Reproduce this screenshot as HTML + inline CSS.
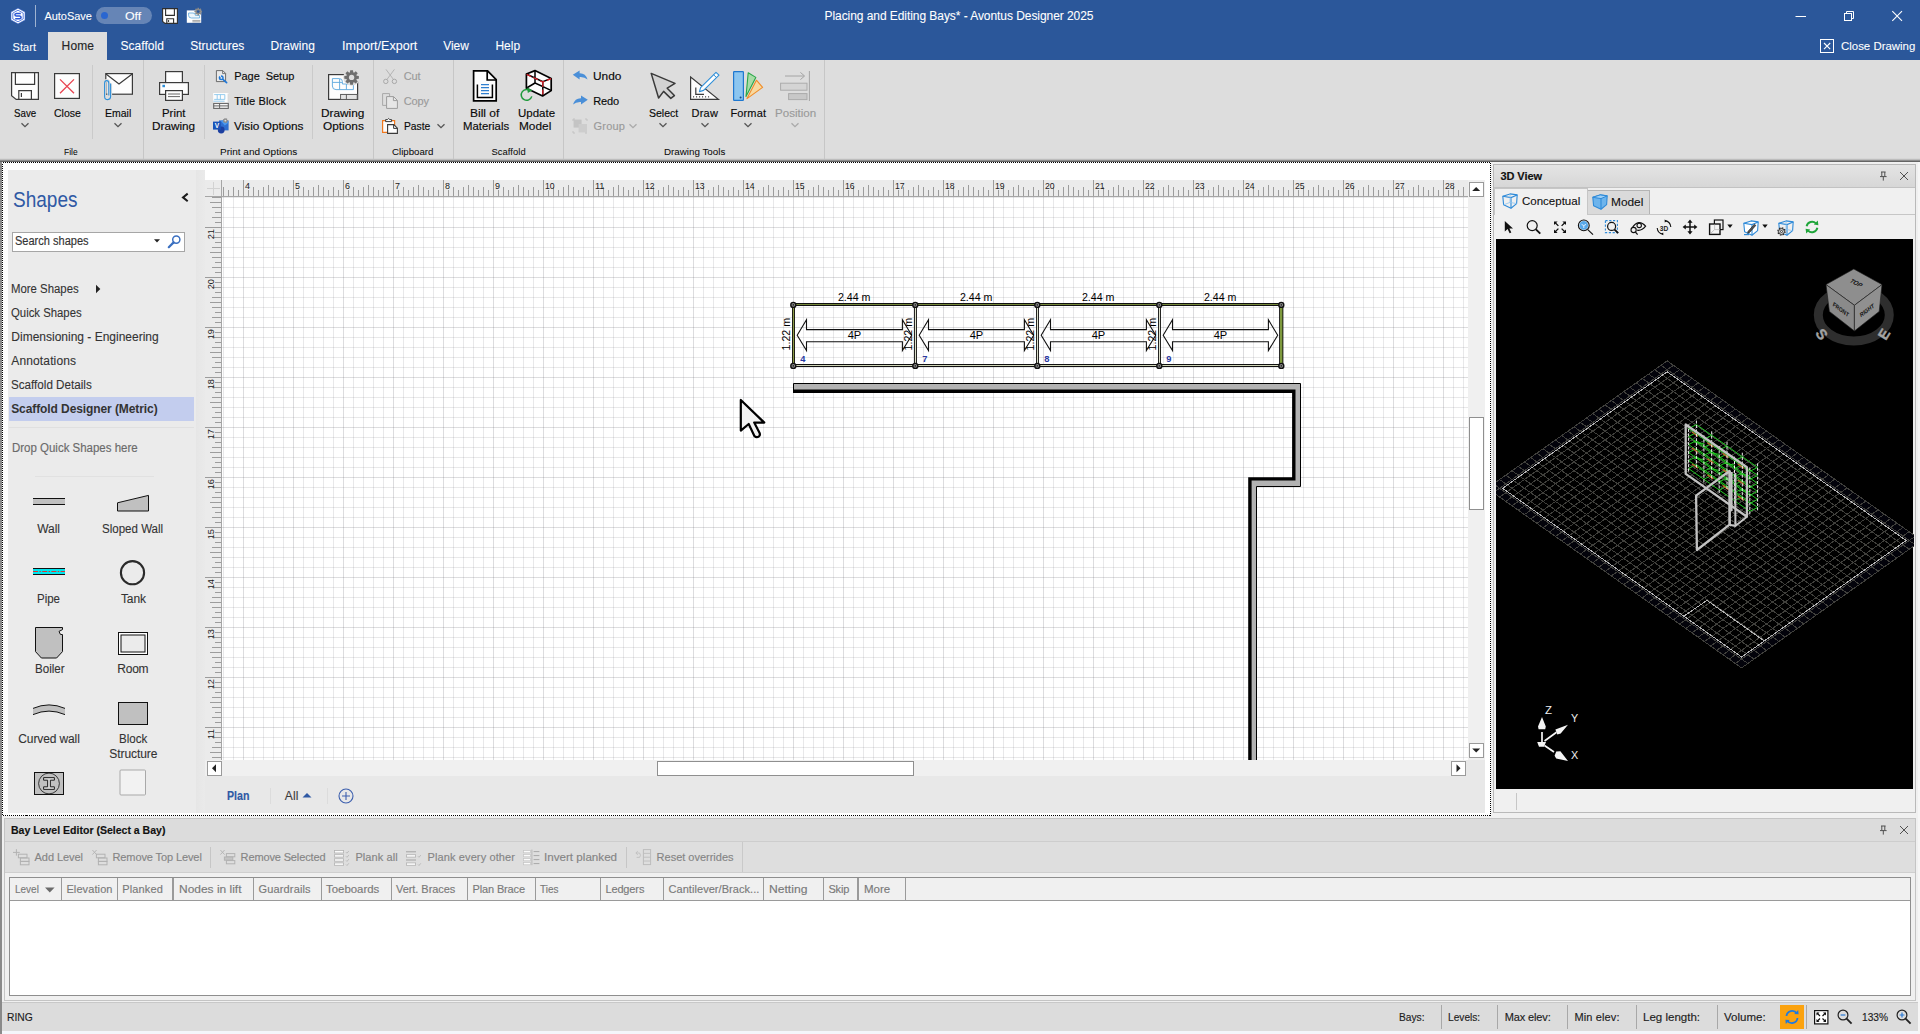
<!DOCTYPE html>
<html lang="en"><head><meta charset="utf-8"><title>Placing and Editing Bays* - Avontus Designer 2025</title>
<style>
html,body{margin:0;padding:0;background:#dcdcdc;}
body{width:1920px;height:1034px;overflow:hidden;position:relative;font-family:'Liberation Sans',sans-serif;font-size:12px;}
#app{position:absolute;left:0;top:0;width:1920px;height:1034px;overflow:hidden;background:#dcdcdc;}
.b{position:absolute;box-sizing:border-box;display:block;}
.t{position:absolute;white-space:pre;line-height:normal;transform-origin:0 0;-webkit-text-stroke:0.15px currentColor;font-family:'Liberation Sans',sans-serif;}
svg text{font-family:'Liberation Sans',sans-serif;}
</style></head>
<body><div id="app">
<div class="b" style="left:0px;top:0px;width:1920px;height:60px;background:#2b579a;"></div>
<div class="b" style="left:0px;top:60px;width:1920px;height:100px;background:#dddddd;"></div>
<div class="b" style="left:48px;top:32px;width:59px;height:28px;background:#dddddd;"></div>
<div class="b" style="left:0px;top:158px;width:1920px;height:1px;background:#d6d6d6;"></div>
<div class="b" style="left:0px;top:159px;width:1920px;height:1px;background:#bdbdbd;"></div>
<div class="b" style="left:0px;top:160px;width:1920px;height:1px;background:#8e8e8e;"></div>
<div class="b" style="left:0px;top:161px;width:1920px;height:1px;background:#646464;"></div>
<span class="t" style="left:824.50px;top:9.00px;font-size:12px;color:#fff;letter-spacing:-0.062px;-webkit-text-stroke:0.08px currentColor;">Placing and Editing Bays* - Avontus Designer 2025</span>
<div class="b" style="left:35px;top:5px;width:1px;height:22px;background:rgba(255,255,255,.55);"></div>
<span class="t" style="left:44.40px;top:10.00px;font-size:11px;color:#fff;letter-spacing:-0.021px;-webkit-text-stroke:0.08px currentColor;">AutoSave</span>
<div class="b" style="left:96px;top:7px;width:56px;height:17px;background:rgba(255,255,255,.28);border-radius:9px;"></div>
<div class="b" style="left:101px;top:12px;width:7px;height:7px;background:#2a66d0;border-radius:50%;"></div>
<span class="t" style="left:124.50px;top:10.00px;font-size:11px;color:#fff;transform:scaleX(1.1241);-webkit-text-stroke:0.08px currentColor;">Off</span>
<span class="t" style="left:12.60px;top:41.00px;font-size:11px;color:#fff;letter-spacing:0.062px;-webkit-text-stroke:0.08px currentColor;">Start</span>
<span class="t" style="left:61.60px;top:39.00px;font-size:12px;color:#262626;letter-spacing:0.133px;">Home</span>
<span class="t" style="left:120.40px;top:39.00px;font-size:12px;color:#fff;letter-spacing:0.068px;-webkit-text-stroke:0.08px currentColor;">Scaffold</span>
<span class="t" style="left:190.30px;top:39.00px;font-size:12px;color:#fff;letter-spacing:-0.081px;-webkit-text-stroke:0.08px currentColor;">Structures</span>
<span class="t" style="left:270.50px;top:39.00px;font-size:12px;color:#fff;letter-spacing:0.083px;-webkit-text-stroke:0.08px currentColor;">Drawing</span>
<span class="t" style="left:341.70px;top:39.00px;font-size:12px;color:#fff;transform:scaleX(1.0458);-webkit-text-stroke:0.08px currentColor;">Import/Export</span>
<span class="t" style="left:443.20px;top:39.00px;font-size:12px;color:#fff;letter-spacing:-0.025px;-webkit-text-stroke:0.08px currentColor;">View</span>
<span class="t" style="left:495.50px;top:39.00px;font-size:12px;color:#fff;letter-spacing:-0.042px;-webkit-text-stroke:0.08px currentColor;">Help</span>
<span class="t" style="left:1840.70px;top:40.00px;font-size:11px;color:#fff;transform:scaleX(1.0392);-webkit-text-stroke:0.08px currentColor;">Close Drawing</span>
<div class="b" style="left:143px;top:60px;width:1px;height:99px;background:#c6c6c6;"></div>
<div class="b" style="left:373px;top:60px;width:1px;height:99px;background:#c6c6c6;"></div>
<div class="b" style="left:453px;top:60px;width:1px;height:99px;background:#c6c6c6;"></div>
<div class="b" style="left:563px;top:60px;width:1px;height:99px;background:#c6c6c6;"></div>
<div class="b" style="left:824px;top:60px;width:1px;height:99px;background:#c6c6c6;"></div>
<div class="b" style="left:92px;top:65px;width:1px;height:74px;background:#cacaca;"></div>
<div class="b" style="left:204px;top:65px;width:1px;height:74px;background:#cacaca;"></div>
<div class="b" style="left:312px;top:65px;width:1px;height:74px;background:#cacaca;"></div>
<span class="t" style="left:64.40px;top:146.00px;font-size:9.4px;color:#0a0a0a;transform:scaleX(0.8992);-webkit-text-stroke:0.04px currentColor;">File</span>
<span class="t" style="left:219.50px;top:146.00px;font-size:9.4px;color:#0a0a0a;transform:scaleX(1.0671);-webkit-text-stroke:0.04px currentColor;">Print and Options</span>
<span class="t" style="left:392.00px;top:146.00px;font-size:9.4px;color:#0a0a0a;transform:scaleX(1.0311);-webkit-text-stroke:0.04px currentColor;">Clipboard</span>
<span class="t" style="left:491.40px;top:146.00px;font-size:9.4px;color:#0a0a0a;letter-spacing:0.079px;-webkit-text-stroke:0.04px currentColor;">Scaffold</span>
<span class="t" style="left:663.50px;top:146.00px;font-size:9.4px;color:#0a0a0a;transform:scaleX(1.0446);-webkit-text-stroke:0.04px currentColor;">Drawing Tools</span>
<span class="t" style="left:13.60px;top:107.00px;font-size:11px;color:#0a0a0a;transform:scaleX(0.8836);">Save</span>
<span class="t" style="left:53.70px;top:107.00px;font-size:11px;color:#0a0a0a;transform:scaleX(0.9529);">Close</span>
<span class="t" style="left:104.60px;top:107.00px;font-size:11px;color:#0a0a0a;transform:scaleX(0.9527);">Email</span>
<span class="t" style="left:162.40px;top:107.00px;font-size:11px;color:#0a0a0a;transform:scaleX(1.0343);">Print</span>
<span class="t" style="left:152.40px;top:120.00px;font-size:11px;color:#0a0a0a;transform:scaleX(1.0675);">Drawing</span>
<span class="t" style="left:321.30px;top:107.00px;font-size:11px;color:#0a0a0a;transform:scaleX(1.0749);">Drawing</span>
<span class="t" style="left:322.60px;top:120.00px;font-size:11px;color:#0a0a0a;transform:scaleX(1.0772);">Options</span>
<span class="t" style="left:470.40px;top:107.00px;font-size:11px;color:#0a0a0a;transform:scaleX(1.0889);">Bill of</span>
<span class="t" style="left:462.50px;top:120.00px;font-size:11px;color:#0a0a0a;transform:scaleX(1.0331);">Materials</span>
<span class="t" style="left:517.50px;top:107.00px;font-size:11px;color:#0a0a0a;transform:scaleX(1.0451);">Update</span>
<span class="t" style="left:519.40px;top:120.00px;font-size:11px;color:#0a0a0a;transform:scaleX(1.0767);">Model</span>
<span class="t" style="left:648.70px;top:107.00px;font-size:11px;color:#0a0a0a;transform:scaleX(0.9567);">Select</span>
<span class="t" style="left:691.50px;top:107.00px;font-size:11px;color:#0a0a0a;letter-spacing:0.250px;">Draw</span>
<span class="t" style="left:730.40px;top:107.00px;font-size:11px;color:#0a0a0a;letter-spacing:0.145px;">Format</span>
<span class="t" style="left:774.50px;top:107.00px;font-size:11px;color:#9a9a9a;transform:scaleX(1.0505);">Position</span>
<svg class="b" style="left:20px;top:121px;" width="10" height="8" viewBox="0 0 10 8"><path d="M1.5 2.2 L5 5.7 L8.5 2.2" fill="none" stroke="#555" stroke-width="1.3"/></svg>
<svg class="b" style="left:113px;top:121px;" width="10" height="8" viewBox="0 0 10 8"><path d="M1.5 2.2 L5 5.7 L8.5 2.2" fill="none" stroke="#555" stroke-width="1.3"/></svg>
<svg class="b" style="left:658px;top:121px;" width="10" height="8" viewBox="0 0 10 8"><path d="M1.5 2.2 L5 5.7 L8.5 2.2" fill="none" stroke="#555" stroke-width="1.3"/></svg>
<svg class="b" style="left:700px;top:121px;" width="10" height="8" viewBox="0 0 10 8"><path d="M1.5 2.2 L5 5.7 L8.5 2.2" fill="none" stroke="#555" stroke-width="1.3"/></svg>
<svg class="b" style="left:743px;top:121px;" width="10" height="8" viewBox="0 0 10 8"><path d="M1.5 2.2 L5 5.7 L8.5 2.2" fill="none" stroke="#555" stroke-width="1.3"/></svg>
<svg class="b" style="left:790px;top:121px;" width="10" height="8" viewBox="0 0 10 8"><path d="M1.5 2.2 L5 5.7 L8.5 2.2" fill="none" stroke="#aaa" stroke-width="1.3"/></svg>
<span class="t" style="left:234.20px;top:70.00px;font-size:11px;color:#0a0a0a;letter-spacing:-0.040px;">Page  Setup</span>
<span class="t" style="left:234.20px;top:95.00px;font-size:11px;color:#0a0a0a;letter-spacing:0.140px;">Title Block</span>
<span class="t" style="left:234.20px;top:120.00px;font-size:11px;color:#0a0a0a;transform:scaleX(1.0754);">Visio Options</span>
<span class="t" style="left:403.70px;top:70.00px;font-size:11px;color:#9a9a9a;letter-spacing:-0.112px;">Cut</span>
<span class="t" style="left:403.70px;top:95.00px;font-size:11px;color:#9a9a9a;letter-spacing:-0.108px;">Copy</span>
<span class="t" style="left:403.70px;top:120.00px;font-size:11px;color:#0a0a0a;transform:scaleX(0.9351);">Paste</span>
<span class="t" style="left:593.20px;top:70.00px;font-size:11px;color:#0a0a0a;transform:scaleX(1.0781);">Undo</span>
<span class="t" style="left:593.20px;top:95.00px;font-size:11px;color:#0a0a0a;letter-spacing:-0.083px;">Redo</span>
<span class="t" style="left:593.50px;top:120.00px;font-size:11px;color:#9a9a9a;letter-spacing:0.219px;">Group</span>
<svg class="b" style="left:435.5px;top:122px;" width="10" height="8" viewBox="0 0 10 8"><path d="M1.5 2.2 L5 5.7 L8.5 2.2" fill="none" stroke="#555" stroke-width="1.3"/></svg>
<svg class="b" style="left:628px;top:122px;" width="10" height="8" viewBox="0 0 10 8"><path d="M1.5 2.2 L5 5.7 L8.5 2.2" fill="none" stroke="#aaa" stroke-width="1.3"/></svg>
<div class="b" style="left:0px;top:162px;width:1920px;height:841px;background:#f0f0f0;"></div>
<svg class="b" style="left:0;top:0" width="1920" height="160" viewBox="0 0 1920 160"><path d="M18 8.2 L25 12.1 V19.9 L18 23.8 L11 19.9 V12.1 Z" fill="#fff" stroke="#3a66d4" stroke-width="0.5"/><path d="M18 10.2 L23.2 13.1 V18.9 L18 21.8 L12.8 18.9 V13.1 Z" fill="none" stroke="#3461d6" stroke-width="0.8"/><path d="M20.8 13.4 H16.4 Q14.8 13.6 14.9 14.8 Q15 16 16.4 16 H19.6 Q21.1 16.2 21.1 17.4 Q21 18.6 19.6 18.7 H15.2" fill="none" stroke="#2a57d6" stroke-width="1.5"/><path d="M162.6 8.6 H177.4 V23.4 H165 L162.6 21.4 Z" fill="#fff" stroke="#2e2e2e" stroke-width="1.1" stroke-linejoin="miter"/><path d="M165.6 8.6 V15.4 H174.4 V8.6 M166.8 23.4 V18.8 H173.6 V23.4" fill="none" stroke="#2e2e2e" stroke-width="1.1"/><path d="M168.6 20 V22" stroke="#2e2e2e" stroke-width="1"/><rect x="186.8" y="10.4" width="14.4" height="12.4" fill="#fff"/><path d="M188.6 13 H193 Q195.4 13 195.4 15.4 H199.6 V18 H191.4 Q188.6 18 188.6 15.4 Z" fill="#eef6fc" stroke="#5aa6dc" stroke-width="0.8"/><path d="M192.4 20.4 H200.4 M192.4 21.8 H200.4" stroke="#9a9a9a" stroke-width="0.9"/><path d="M200.87 10.73 L202.03 10.87 L202.03 12.33 L200.87 12.47 L200.70 12.87 L201.43 13.79 L200.39 14.83 L199.47 14.10 L199.07 14.27 L198.93 15.43 L197.47 15.43 L197.33 14.27 L196.93 14.10 L196.01 14.83 L194.97 13.79 L195.70 12.87 L195.53 12.47 L194.37 12.33 L194.37 10.87 L195.53 10.73 L195.70 10.33 L194.97 9.41 L196.01 8.37 L196.93 9.10 L197.33 8.93 L197.47 7.77 L198.93 7.77 L199.07 8.93 L199.47 9.10 L200.39 8.37 L201.43 9.41 L200.70 10.33 Z" fill="#8a8a8a"/><circle cx="198.2" cy="11.6" r="1.40" fill="#2b579a"/><path d="M1795.5 16.5 H1806" stroke="#fff" stroke-width="1"/><rect x="1844.5" y="13.5" width="7" height="7" fill="none" stroke="#fff" stroke-width="1"/><path d="M1846.5 13.5 V11.5 H1853.5 V18.5 H1851.5" fill="none" stroke="#fff" stroke-width="1"/><path d="M1892.3 11.2 L1902 20.9 M1902 11.2 L1892.3 20.9" stroke="#fff" stroke-width="1.1"/><rect x="1820.5" y="39.5" width="13" height="13" fill="none" stroke="#fff" stroke-width="1"/><path d="M1824 43 L1830.2 49.2 M1830.2 43 L1824 49.2" stroke="#fff" stroke-width="1.1"/><path d="M11.6 72.6 H38.4 V99.4 H16.2 L11.6 95.6 Z" fill="#fdfdfd" stroke="#3a3a3a" stroke-width="1.2"/><path d="M15.4 72.6 V84.4 H34.6 V72.6 M18.8 99.4 V90.6 H31.4 V99.4" fill="none" stroke="#3a3a3a" stroke-width="1.2"/><path d="M21.4 93 V97" stroke="#3a3a3a" stroke-width="1.2"/><rect x="54.6" y="73.6" width="24.8" height="24.8" fill="#fdfdfd" stroke="#3a3a3a" stroke-width="1.2"/><path d="M60 79.4 L74 93.2 M74 79.4 L60 93.2" stroke="#e8414e" stroke-width="1.3"/><rect x="105.8" y="73.6" width="26.6" height="20.6" fill="#fdfdfd" stroke="#3a3a3a" stroke-width="1.2"/><path d="M106 74 L119 84 L132.2 74" fill="none" stroke="#3a3a3a" stroke-width="1.2"/><path d="M110.6 83.4 V96.6 Q110.6 99.6 107.8 99.6 Q104.6 99.6 104.6 96.4 V83.2 Q104.6 80.6 106.8 80.6 Q108.8 80.6 108.8 83.2 V95.4" fill="none" stroke="#dddddd" stroke-width="3"/><path d="M110.6 83.4 V96.6 Q110.6 99.6 107.8 99.6 Q104.6 99.6 104.6 96.4 V83.2 Q104.6 80.6 106.8 80.6 Q108.8 80.6 108.8 83.2 V95.4" fill="none" stroke="#2f8fd8" stroke-width="1.1"/><rect x="165.6" y="71.6" width="16.8" height="12" fill="#fdfdfd" stroke="#3a3a3a" stroke-width="1.2"/><rect x="159.6" y="82.6" width="28.8" height="11.8" fill="#fdfdfd" stroke="#3a3a3a" stroke-width="1.2"/><rect x="165.6" y="90.6" width="16.8" height="9.8" fill="#fdfdfd" stroke="#3a3a3a" stroke-width="1.2"/><path d="M168 94 H180 M168 96.6 H180" stroke="#555" stroke-width="0.9"/><rect x="162.4" y="84.8" width="2.6" height="2.4" fill="#2f8fd8"/><rect x="328.6" y="74.6" width="29" height="24.8" fill="#fdfdfd" stroke="#3a3a3a" stroke-width="1.2"/><path d="M332.4 78.6 H339.4 Q342.4 78.6 342.4 81.6 V84 H353.4 V89.6 H336 Q332.4 89.6 332.4 86 Z M339.6 79 V89.4 M346.4 84 V89.6 M332.6 82.4 H342" fill="none" stroke="#5aa6dc" stroke-width="0.9"/><path d="M340.6 94.6 H357.4 M346.2 94.6 V99.2" stroke="#555" stroke-width="1"/><rect x="340.6" y="94.4" width="16.6" height="5" fill="#e4e4e4" stroke="#555" stroke-width="0.9"/><path d="M346.4 94.4 V99.4" stroke="#555" stroke-width="0.9"/><circle cx="351.6" cy="77.4" r="8.4" fill="#dddddd"/><path d="M356.67 75.75 L358.87 76.01 L358.87 78.79 L356.67 79.05 L356.35 79.82 L357.72 81.56 L355.76 83.52 L354.02 82.15 L353.25 82.47 L352.99 84.67 L350.21 84.67 L349.95 82.47 L349.18 82.15 L347.44 83.52 L345.48 81.56 L346.85 79.82 L346.53 79.05 L344.33 78.79 L344.33 76.01 L346.53 75.75 L346.85 74.98 L345.48 73.24 L347.44 71.28 L349.18 72.65 L349.95 72.33 L350.21 70.13 L352.99 70.13 L353.25 72.33 L354.02 72.65 L355.76 71.28 L357.72 73.24 L356.35 74.98 Z" fill="#6e6e6e"/><circle cx="351.6" cy="77.4" r="2.66" fill="#dddddd"/><path d="M473.6 70.8 H487.6 L496.2 79.6 V100.8 H473.6 Z" fill="#fdfdfd" stroke="#000" stroke-width="1.7" stroke-linejoin="miter"/><path d="M487.2 71 V80 H496" fill="none" stroke="#000" stroke-width="1.7"/><path d="M477.4 84.6 V97.4 H492.4 V84.6" fill="none" stroke="#000" stroke-width="1.5"/><path d="M481 84.6 H489 M481 87.6 H489 M481 90.6 H489 M481 93.6 H489" stroke="#2f7fd0" stroke-width="1.2"/><path d="M526.4 74 L535 70.6 L551.2 78.4 V90.6 L542.6 96 L526.4 88.2 Z" fill="#fdfdfd" stroke="#000" stroke-width="1.7" stroke-linejoin="round"/><path d="M526.4 74 L542.8 81.8 L551.2 78.4 M542.8 81.8 V96 M535 70.6 V83 L551 90.4 M535 83 L526.6 88" fill="none" stroke="#000" stroke-width="1.5"/><path d="M526.6 74.4 L542.8 82 L551.2 78.6 M542.8 82 V95.6" fill="none" stroke="#e0242c" stroke-width="1.2" stroke-dasharray="5 2.4"/><circle cx="526.6" cy="94.8" r="5.4" fill="#dddddd"/><path d="M530.6 91.2 A5.4 5.4 0 1 0 531.8 96.4" fill="none" stroke="#1f9a3c" stroke-width="1.5"/><path d="M527.2 87.4 L532.4 90.2 L527.8 93 Z" fill="#1f9a3c"/><path d="M651.2 73.4 L675 83.4 L667.2 88.2 L674.4 95.6 L670.8 98.4 L663.6 91.4 L658.6 98 Z" fill="#d2d2d2" stroke="#3a3a3a" stroke-width="1.5" stroke-linejoin="round"/><path d="M690.6 77 V99.4 H718.4 Z" fill="#fdfdfd" stroke="#3a3a3a" stroke-width="1.2" stroke-linejoin="miter"/><path d="M695.8 87.4 V94.4 H704" fill="none" stroke="#3a3a3a" stroke-width="1.2"/><path d="M693.6 97.6 V96 M696.6 97.6 V96 M699.6 97.6 V96 M702.6 97.6 V96 M705.6 97.6 V96 M708.6 97.6 V96" stroke="#3a3a3a" stroke-width="0.8"/><path d="M716 72.4 L719 75.2 L703.6 90.4 L699.4 91.6 L700.6 87.6 Z" fill="#fdfdfd" stroke="#2f8fd8" stroke-width="1.1" stroke-linejoin="round"/><path d="M713.6 74.8 L716.6 77.6" stroke="#2f8fd8" stroke-width="1"/><path d="M756.4 80.2 L762.6 87.4 L747 98.6 Z" fill="#f8d9a0" stroke="#f08c28" stroke-width="1.1" stroke-linejoin="round"/><path d="M748.2 72.8 L755.8 77.4 L746 96.6 Z" fill="#a8dca8" stroke="#28a848" stroke-width="1.1" stroke-linejoin="round"/><rect x="733.6" y="71.6" width="9.8" height="28.8" rx="0.6" fill="#8cc6f0" stroke="#1f78d0" stroke-width="1.2"/><circle cx="740.6" cy="97.6" r="1" fill="#1a4a80"/><path d="M785 76 H804 M800.4 72.4 L804.6 76 L800.4 79.6" fill="none" stroke="#a4a4a4" stroke-width="1"/><path d="M809.4 71 V101" stroke="#a4a4a4" stroke-width="1"/><rect x="780.6" y="83.2" width="26.4" height="7" fill="#d4d4d4" stroke="#ababab" stroke-width="1"/><rect x="788.6" y="93.6" width="18.4" height="6" fill="#c8c8c8" stroke="#ababab" stroke-width="1"/><path d="M216.4 70.6 H222.8 L225.6 73.4 V81.6 H216.4 Z" fill="#e9e9e9" stroke="#5e5e5e" stroke-width="0.9"/><path d="M222.6 70.8 V73.6 H225.4" fill="none" stroke="#5e5e5e" stroke-width="0.8"/><path d="M222.6 79.2 L226.6 82.6" stroke="#1f78d8" stroke-width="1.7" stroke-linecap="round"/><circle cx="221.2" cy="77.7" r="2.5" fill="#1f78d8"/><path d="M221.2 77.7 L218.6 75.2 L220.8 74.4 Z" fill="#e9e9e9"/><circle cx="221.4" cy="77.9" r="0.9" fill="#e9e9e9"/><rect x="213.2" y="93" width="15.4" height="9.8" fill="#fdfdfd"/><path d="M228.2 93.6 V102.6" stroke="#d0d0d0" stroke-width="1"/><path d="M214.2 94.6 H224.8 V99.4 H214.2 M217.2 94.6 V99.4 M220.4 94.6 V99.4 M213.4 101.2 H224.6" fill="none" stroke="#7cc0ea" stroke-width="0.8"/><rect x="213.7" y="103.4" width="14.6" height="5" fill="#f6f6f6" stroke="#666" stroke-width="1.1"/><path d="M213.6 105.9 H228.4 M219.6 103.4 V108.4" stroke="#666" stroke-width="1"/><path d="M219 120.4 H228.6 V130.4 H219 Z" fill="#2f6fd0"/><circle cx="221.2" cy="130" r="3.4" fill="#1c3fa0"/><path d="M221 121.2 L225.4 119 L228.8 122.4 L224.8 125.6Z" fill="#4a9af0"/><rect x="213" y="121.6" width="7.8" height="8" fill="#1a54b8"/><text x="216.9" y="128.4" font-size="6.6" font-weight="700" fill="#fff" text-anchor="middle">V</text><path d="M227.15 119.94 L227.94 120.04 L227.94 121.16 L227.15 121.26 L227.01 121.56 L227.42 122.24 L226.55 122.93 L225.98 122.38 L225.65 122.46 L225.38 123.20 L224.29 122.95 L224.37 122.16 L224.11 121.95 L223.35 122.20 L222.87 121.20 L223.54 120.77 L223.54 120.43 L222.87 120.00 L223.35 119.00 L224.11 119.25 L224.37 119.04 L224.29 118.25 L225.38 118.00 L225.65 118.74 L225.98 118.82 L226.55 118.27 L227.42 118.96 L227.01 119.64 Z" fill="#8c8c8c"/><circle cx="225.4" cy="120.6" r="0.94" fill="#dddddd"/><path d="M386 69.4 L393.4 79.4 M394.4 69.4 L387 79.4" stroke="#b4b4b4" stroke-width="1"/><circle cx="385.8" cy="81.4" r="2.2" fill="none" stroke="#a8a8a8" stroke-width="1"/><circle cx="394.4" cy="81.4" r="2.2" fill="none" stroke="#a8a8a8" stroke-width="1"/><path d="M382.6 93.6 H389.6 V105.4 H382.6 Z" fill="none" stroke="#a8a8a8" stroke-width="1"/><path d="M386.6 96.6 H393.6 L397.4 100.4 V108.4 H386.6 Z" fill="#e6e6e6" stroke="#9c9c9c" stroke-width="1"/><path d="M393.4 96.8 V100.6 H397.2" fill="none" stroke="#9c9c9c" stroke-width="1"/><path d="M382.6 120.6 H394.6 V132.4 H382.6 Z" fill="#fdfdfd" stroke="#f0781e" stroke-width="1.2"/><path d="M385.6 121.6 V119.6 H387.4 Q388.6 117.4 389.8 119.6 H391.6 V121.6 Z" fill="#fdfdfd" stroke="#3a3a3a" stroke-width="1"/><path d="M387.6 124.6 H393.8 L397.4 128.2 V133.4 H387.6 Z" fill="#fdfdfd" stroke="#3a3a3a" stroke-width="1.1"/><path d="M393.6 124.8 V128.4 H397.2" fill="none" stroke="#3a3a3a" stroke-width="1"/><path d="M572.8 74.8 L579.6 70.4 V73.2 Q585.6 73 587.6 79.6 Q584.4 76.6 579.6 77 V79.6 Z" fill="#4a8fd8"/><path d="M587.8 99.8 L581 95.4 V98.2 Q575 98 573 104.6 Q576.2 101.6 581 102 V104.6 Z" fill="#4a8fd8"/><rect x="573.6" y="119.6" width="8" height="8" fill="#c4c4c4"/><rect x="578.6" y="124" width="8.4" height="8.4" fill="#cdcdcd"/><path d="M573 121 V119 H575 M585 119 H587 V121 M573 131 V133 H575 M585 133 H587" fill="none" stroke="#bcbcbc" stroke-width="0.8"/></svg>
<div class="b" style="left:2px;top:162px;width:1489px;height:654px;background:#ffffff;"></div>
<svg class="b" style="left:2px;top:162px" width="1490" height="655"><rect x="0.5" y="0.5" width="1488" height="653" fill="none" stroke="#000" stroke-width="1" stroke-dasharray="1 1" shape-rendering="crispEdges"/></svg>
<div class="b" style="left:8px;top:170px;width:188px;height:643px;background:#ebebeb;"></div>
<div class="b" style="left:196px;top:170px;width:9px;height:643px;background:linear-gradient(90deg,#e6e6e6,#eaeaea);"></div>
<span class="t" style="left:12.70px;top:186.50px;font-size:22.5px;color:#2f59a4;transform:scaleX(0.8458);-webkit-text-stroke:0;">Shapes</span>
<svg class="b" style="left:180px;top:190px;" width="10" height="14" viewBox="0 0 10 14"><path d="M7.7 3.6 L3 7.4 L7.7 11.2" fill="none" stroke="#1c1c1c" stroke-width="2"/></svg>
<div class="b" style="left:12px;top:232px;width:173px;height:20px;background:#ffffff;border:1px solid #a6a6a6;"></div>
<span class="t" style="left:14.50px;top:234.00px;font-size:12px;color:#333;transform:scaleX(0.9187);">Search shapes</span>
<svg class="b" style="left:153px;top:238px;" width="8" height="6" viewBox="0 0 8 6"><path d="M1 1.2 H7 L4 4.6 Z" fill="#222"/></svg>
<svg class="b" style="left:167px;top:234px;" width="16" height="16" viewBox="0 0 16 16"><circle cx="9.3" cy="5.6" r="3.6" fill="none" stroke="#3a6fc0" stroke-width="1.5"/><path d="M6.6 8.4 L1.8 13.2" stroke="#3a6fc0" stroke-width="2.2" stroke-linecap="round"/></svg>
<span class="t" style="left:11.30px;top:282.00px;font-size:12px;color:#333333;transform:scaleX(0.9485);-webkit-text-stroke:0.1px currentColor;">More Shapes</span>
<span class="t" style="left:11.30px;top:306.00px;font-size:12px;color:#333333;transform:scaleX(0.9458);-webkit-text-stroke:0.1px currentColor;">Quick Shapes</span>
<span class="t" style="left:11.30px;top:330.00px;font-size:12px;color:#333333;-webkit-text-stroke:0.1px currentColor;">Dimensioning - Engineering</span>
<span class="t" style="left:11.30px;top:354.00px;font-size:12px;color:#333333;letter-spacing:0.133px;-webkit-text-stroke:0.1px currentColor;">Annotations</span>
<span class="t" style="left:11.30px;top:378.00px;font-size:12px;color:#333333;transform:scaleX(0.9708);-webkit-text-stroke:0.1px currentColor;">Scaffold Details</span>
<svg class="b" style="left:95px;top:284px;" width="6" height="10" viewBox="0 0 6 10"><path d="M1 0.8 L5.3 5 L1 9.2 Z" fill="#222"/></svg>
<div class="b" style="left:9px;top:397px;width:185px;height:24px;background:#c3cdee;"></div>
<span class="t" style="left:11.20px;top:402.00px;font-size:12px;color:#333;font-weight:700;letter-spacing:-0.090px;-webkit-text-stroke:0;">Scaffold Designer (Metric)</span>
<span class="t" style="left:12.40px;top:441.00px;font-size:12px;color:#6a6a6a;transform:scaleX(0.9560);">Drop Quick Shapes here</span>
<div class="b" style="left:35px;top:476px;width:119px;height:1px;background:#e1e1e1;"></div>
<div class="b" style="left:9px;top:427px;width:185px;height:1px;background:#e0e0e0;"></div>
<span class="t" style="left:37.20px;top:522.00px;font-size:12px;color:#333333;letter-spacing:-0.058px;-webkit-text-stroke:0.1px currentColor;">Wall</span>
<span class="t" style="left:102.10px;top:522.00px;font-size:12px;color:#333333;transform:scaleX(0.9619);-webkit-text-stroke:0.1px currentColor;">Sloped Wall</span>
<span class="t" style="left:37.20px;top:592.00px;font-size:12px;color:#333333;transform:scaleX(0.9583);-webkit-text-stroke:0.1px currentColor;">Pipe</span>
<span class="t" style="left:121.00px;top:592.00px;font-size:12px;color:#333333;letter-spacing:-0.133px;-webkit-text-stroke:0.1px currentColor;">Tank</span>
<span class="t" style="left:34.50px;top:662.00px;font-size:12px;color:#333333;transform:scaleX(0.9665);-webkit-text-stroke:0.1px currentColor;">Boiler</span>
<span class="t" style="left:117.20px;top:662.00px;font-size:12px;color:#333333;letter-spacing:-0.200px;-webkit-text-stroke:0.1px currentColor;">Room</span>
<span class="t" style="left:18.30px;top:732.00px;font-size:12px;color:#333333;letter-spacing:-0.115px;-webkit-text-stroke:0.1px currentColor;">Curved wall</span>
<span class="t" style="left:118.60px;top:732.00px;font-size:12px;color:#333333;transform:scaleX(0.9627);-webkit-text-stroke:0.1px currentColor;">Block</span>
<span class="t" style="left:109.30px;top:747.00px;font-size:12px;color:#333333;letter-spacing:-0.078px;-webkit-text-stroke:0.1px currentColor;">Structure</span>
<svg class="b" style="left:8px;top:480px" width="188" height="333" viewBox="8 480 188 333"><rect x="33" y="498" width="32" height="7" fill="#c0c0c0"/><path d="M33 498.5 H65 M33 504.5 H65" stroke="#111" stroke-width="1"/><path d="M117.5 511 V502.8 L148.5 495.4 V511 Z" fill="#c0c0c0" stroke="#111" stroke-width="1"/><rect x="33" y="568" width="32" height="7" fill="#00e6ee"/><path d="M33 568.5 H65 M33 574.5 H65" stroke="#111" stroke-width="1"/><path d="M33 571.5 H65" stroke="#f02020" stroke-width="0.9" stroke-dasharray="5 1.4 1.4 1.4"/><circle cx="132.5" cy="572.7" r="11.6" fill="#ebebeb" stroke="#2a2a2a" stroke-width="2.1"/><path d="M35.5 627.5 H62.5 V629.6 L59 631.4 L60.4 634.4 L62.5 634.6 V651.6 L56.6 658 H41.4 L35.5 651.6 Z" fill="#c0c0c0" stroke="#111" stroke-width="1"/><rect x="118.5" y="632.5" width="29" height="22" fill="#fff" stroke="#111" stroke-width="1"/><rect x="121" y="635" width="24" height="17" fill="#ebebeb" stroke="#111" stroke-width="1"/><path d="M33 708.4 Q49 701.4 65 708.4 V714.6 Q49 707.6 33 714.6 Z" fill="#c0c0c0"/><path d="M33 708.4 Q49 701.4 65 708.4 M33 714.6 Q49 707.6 65 714.6" fill="none" stroke="#111" stroke-width="1"/><rect x="118.5" y="702.5" width="29" height="22" fill="#c0c0c0" stroke="#111" stroke-width="1"/><rect x="34.5" y="772.5" width="29" height="22" fill="#c0c0c0" stroke="#111" stroke-width="1"/><circle cx="49" cy="783.5" r="10.4" fill="none" stroke="#111" stroke-width="0.8"/><path d="M43.6 777.6 H54.4 V780.2 H50.4 V786.8 H54.4 V789.4 H43.6 V786.8 H47.6 V780.2 H43.6 Z" fill="#d6d6d6" stroke="#111" stroke-width="0.9"/><rect x="120" y="770" width="25.5" height="25" rx="1" fill="#f2f2f2" stroke="#a9a9a9" stroke-width="1"/></svg>
<div class="b" style="left:205px;top:776px;width:1280px;height:37px;background:#e8e8e8;"></div>
<div class="b" style="left:1466px;top:760px;width:19px;height:16px;background:#e8e8e8;"></div>
<div class="b" style="left:222px;top:197px;width:1246px;height:563px;background-color:#fff;background-image:linear-gradient(90deg,rgba(40,40,52,.06) 1px,transparent 1px),linear-gradient(rgba(40,40,52,.06) 1px,transparent 1px),linear-gradient(90deg,rgba(40,40,54,.105) 1px,transparent 1px),linear-gradient(rgba(40,40,54,.105) 1px,transparent 1px);background-size:50px 50px,50px 50px,10px 10px,10px 10px;background-position:21px 0,0 30px,1px 0,0 0px;"></div>
<div class="b" style="left:205px;top:180px;width:1263px;height:17px;background:#ebebeb;"></div>
<div class="b" style="left:205px;top:197px;width:17px;height:563px;background:#ebebeb;"></div>
<div class="b" style="left:205px;top:196px;width:1263px;height:1px;background:#a6a6a6;"></div>
<div class="b" style="left:221px;top:180px;width:1px;height:580px;background:#a6a6a6;"></div>
<svg class="b" style="left:222px;top:180px;shape-rendering:crispEdges;" width="1246" height="16" viewBox="0 0 1246 16"><defs><pattern id="ht" x="21" y="0" width="50" height="17" patternUnits="userSpaceOnUse"><path d="M0.5 0V17 M5.5 10V17 M10.5 7V17 M15.5 10V17 M20.5 7V17 M25.5 5V17 M30.5 7V17 M35.5 10V17 M40.5 7V17 M45.5 10V17" stroke="#9c9c9c" stroke-width="1" fill="none"/></pattern></defs><rect x="0" y="0" width="1246" height="16" fill="url(#ht)"/></svg>
<svg class="b" style="left:205px;top:197px;shape-rendering:crispEdges;" width="16" height="563" viewBox="0 0 16 563"><defs><pattern id="vt" x="0" y="30" width="17" height="50" patternUnits="userSpaceOnUse"><path d="M0 0.5H17 M10 5.5H17 M7 10.5H17 M10 15.5H17 M7 20.5H17 M5 25.5H17 M7 30.5H17 M10 35.5H17 M7 40.5H17 M10 45.5H17" stroke="#9c9c9c" stroke-width="1" fill="none"/></pattern></defs><rect x="0" y="0" width="16" height="563" fill="url(#vt)"/></svg>
<svg class="b" style="left:205px;top:180px;shape-rendering:crispEdges;" width="17" height="17" viewBox="0 0 17 17"><path d="M8.5 2V15 M1.5 8.5H15" stroke="#d2d2d2" stroke-width="1" fill="none"/></svg>
<svg class="b" style="left:205px;top:180px" width="1263" height="580" viewBox="205 180 1263 580"><text x="244.9" y="189.4" font-size="9" fill="#1a1a1a" textLength="5.0" lengthAdjust="spacingAndGlyphs">4</text><text x="294.9" y="189.4" font-size="9" fill="#1a1a1a" textLength="5.0" lengthAdjust="spacingAndGlyphs">5</text><text x="344.9" y="189.4" font-size="9" fill="#1a1a1a" textLength="5.0" lengthAdjust="spacingAndGlyphs">6</text><text x="394.9" y="189.4" font-size="9" fill="#1a1a1a" textLength="5.0" lengthAdjust="spacingAndGlyphs">7</text><text x="444.9" y="189.4" font-size="9" fill="#1a1a1a" textLength="5.0" lengthAdjust="spacingAndGlyphs">8</text><text x="494.9" y="189.4" font-size="9" fill="#1a1a1a" textLength="5.0" lengthAdjust="spacingAndGlyphs">9</text><text x="544.9" y="189.4" font-size="9" fill="#1a1a1a" textLength="9.6" lengthAdjust="spacingAndGlyphs">10</text><text x="594.9" y="189.4" font-size="9" fill="#1a1a1a" textLength="9.6" lengthAdjust="spacingAndGlyphs">11</text><text x="644.9" y="189.4" font-size="9" fill="#1a1a1a" textLength="9.6" lengthAdjust="spacingAndGlyphs">12</text><text x="694.9" y="189.4" font-size="9" fill="#1a1a1a" textLength="9.6" lengthAdjust="spacingAndGlyphs">13</text><text x="744.9" y="189.4" font-size="9" fill="#1a1a1a" textLength="9.6" lengthAdjust="spacingAndGlyphs">14</text><text x="794.9" y="189.4" font-size="9" fill="#1a1a1a" textLength="9.6" lengthAdjust="spacingAndGlyphs">15</text><text x="844.9" y="189.4" font-size="9" fill="#1a1a1a" textLength="9.6" lengthAdjust="spacingAndGlyphs">16</text><text x="894.9" y="189.4" font-size="9" fill="#1a1a1a" textLength="9.6" lengthAdjust="spacingAndGlyphs">17</text><text x="944.9" y="189.4" font-size="9" fill="#1a1a1a" textLength="9.6" lengthAdjust="spacingAndGlyphs">18</text><text x="994.9" y="189.4" font-size="9" fill="#1a1a1a" textLength="9.6" lengthAdjust="spacingAndGlyphs">19</text><text x="1044.9" y="189.4" font-size="9" fill="#1a1a1a" textLength="9.6" lengthAdjust="spacingAndGlyphs">20</text><text x="1094.9" y="189.4" font-size="9" fill="#1a1a1a" textLength="9.6" lengthAdjust="spacingAndGlyphs">21</text><text x="1144.9" y="189.4" font-size="9" fill="#1a1a1a" textLength="9.6" lengthAdjust="spacingAndGlyphs">22</text><text x="1194.9" y="189.4" font-size="9" fill="#1a1a1a" textLength="9.6" lengthAdjust="spacingAndGlyphs">23</text><text x="1244.9" y="189.4" font-size="9" fill="#1a1a1a" textLength="9.6" lengthAdjust="spacingAndGlyphs">24</text><text x="1294.9" y="189.4" font-size="9" fill="#1a1a1a" textLength="9.6" lengthAdjust="spacingAndGlyphs">25</text><text x="1344.9" y="189.4" font-size="9" fill="#1a1a1a" textLength="9.6" lengthAdjust="spacingAndGlyphs">26</text><text x="1394.9" y="189.4" font-size="9" fill="#1a1a1a" textLength="9.6" lengthAdjust="spacingAndGlyphs">27</text><text x="1444.9" y="189.4" font-size="9" fill="#1a1a1a" textLength="9.6" lengthAdjust="spacingAndGlyphs">28</text><text transform="translate(213.5 739.3) rotate(-90)" font-size="9.3" fill="#1a1a1a" textLength="10.2" lengthAdjust="spacingAndGlyphs">11</text><text transform="translate(213.5 689.3) rotate(-90)" font-size="9.3" fill="#1a1a1a" textLength="10.2" lengthAdjust="spacingAndGlyphs">12</text><text transform="translate(213.5 639.3) rotate(-90)" font-size="9.3" fill="#1a1a1a" textLength="10.2" lengthAdjust="spacingAndGlyphs">13</text><text transform="translate(213.5 589.3) rotate(-90)" font-size="9.3" fill="#1a1a1a" textLength="10.2" lengthAdjust="spacingAndGlyphs">14</text><text transform="translate(213.5 539.3) rotate(-90)" font-size="9.3" fill="#1a1a1a" textLength="10.2" lengthAdjust="spacingAndGlyphs">15</text><text transform="translate(213.5 489.3) rotate(-90)" font-size="9.3" fill="#1a1a1a" textLength="10.2" lengthAdjust="spacingAndGlyphs">16</text><text transform="translate(213.5 439.3) rotate(-90)" font-size="9.3" fill="#1a1a1a" textLength="10.2" lengthAdjust="spacingAndGlyphs">17</text><text transform="translate(213.5 389.3) rotate(-90)" font-size="9.3" fill="#1a1a1a" textLength="10.2" lengthAdjust="spacingAndGlyphs">18</text><text transform="translate(213.5 339.3) rotate(-90)" font-size="9.3" fill="#1a1a1a" textLength="10.2" lengthAdjust="spacingAndGlyphs">19</text><text transform="translate(213.5 289.3) rotate(-90)" font-size="9.3" fill="#1a1a1a" textLength="10.2" lengthAdjust="spacingAndGlyphs">20</text><text transform="translate(213.5 239.3) rotate(-90)" font-size="9.3" fill="#1a1a1a" textLength="10.2" lengthAdjust="spacingAndGlyphs">21</text></svg>
<div class="b" style="left:1468px;top:180px;width:17px;height:580px;background:#f0f0f0;"></div>
<svg class="b" style="left:1469px;top:182px;" width="15" height="15" viewBox="0 0 15 15"><rect x="0.5" y="0.5" width="14" height="14" fill="#fff" stroke="#9a9a9a"/><path d="M3.2 9 L7.2 5 L11.2 9 Z" fill="#222"/></svg>
<svg class="b" style="left:1469px;top:743px;" width="15" height="15" viewBox="0 0 15 15"><rect x="0.5" y="0.5" width="14" height="14" fill="#fff" stroke="#9a9a9a"/><path d="M3.2 5.5 L11.2 5.5 L7.2 9.5 Z" fill="#222"/></svg>
<div class="b" style="left:1469px;top:417px;width:15px;height:93px;background:#ffffff;border:1px solid #8f8f8f;"></div>
<div class="b" style="left:205px;top:760px;width:1261px;height:16px;background:#f0f0f0;"></div>
<svg class="b" style="left:207px;top:761px;" width="15" height="15" viewBox="0 0 15 15"><rect x="0.5" y="0.5" width="14" height="14" fill="#fff" stroke="#9a9a9a"/><path d="M9 3.2 L5 7.2 L9 11.2 Z" fill="#222"/></svg>
<svg class="b" style="left:1451px;top:761px;" width="15" height="15" viewBox="0 0 15 15"><rect x="0.5" y="0.5" width="14" height="14" fill="#fff" stroke="#9a9a9a"/><path d="M5.5 3.2 L9.5 7.2 L5.5 11.2 Z" fill="#222"/></svg>
<div class="b" style="left:657px;top:761px;width:257px;height:15px;background:#ffffff;border:1px solid #8f8f8f;"></div>
<span class="t" style="left:226.50px;top:789.00px;font-size:12px;color:#2f59a4;font-weight:700;transform:scaleX(0.8828);">Plan</span>
<span class="t" style="left:284.80px;top:789.00px;font-size:12px;color:#3a3a3a;letter-spacing:0.162px;-webkit-text-stroke:0.1px currentColor;">All</span>
<svg class="b" style="left:301px;top:791.4px;" width="12" height="8" viewBox="0 0 12 8"><path d="M1.5 6.5 L6 2 L10.5 6.5 Z" fill="#2f59a4"/></svg>
<div class="b" style="left:270px;top:788px;width:1px;height:16px;background:#dcdcdc;"></div>
<div class="b" style="left:327px;top:788px;width:1px;height:16px;background:#dcdcdc;"></div>
<svg class="b" style="left:337px;top:786.6px;" width="18" height="18" viewBox="0 0 18 18"><circle cx="9" cy="9" r="7" fill="none" stroke="#3c5fae" stroke-width="1.1"/><path d="M9 5V13 M5 9H13" stroke="#3c5fae" stroke-width="1.1"/></svg>
<svg class="b" style="left:222px;top:197px" width="1246" height="563" viewBox="222 197 1246 563"><path d="M793.5 392 V383.5 H1300.5 V486.5 H1256.5 V760 H1249 V479 H1294 V391.5 H793.5 Z" fill="#b2b2b2" stroke="none"/><path d="M793.5 392.5 V383.5 H1300.5 V486.5 H1256.5 V760" fill="none" stroke="#000" stroke-width="1"/><path d="M793 391.2 H1293.8 V478.9 H1249.9 V760" fill="none" stroke="#000" stroke-width="3.4" stroke-linejoin="miter"/><path d="M793.5 365.5 L1281.5 365.5" stroke="#111" stroke-width="3" fill="none"/><path d="M793.5 365.5 L1281.5 365.5" stroke="#cfd4b6" stroke-width="1.2" fill="none"/><path d="M915.5 304.5 L915.5 365.5" stroke="#111" stroke-width="3" fill="none"/><path d="M915.5 304.5 L915.5 365.5" stroke="#dde0cc" stroke-width="1.2" fill="none"/><path d="M1037.5 304.5 L1037.5 365.5" stroke="#111" stroke-width="3" fill="none"/><path d="M1037.5 304.5 L1037.5 365.5" stroke="#dde0cc" stroke-width="1.2" fill="none"/><path d="M1159.5 304.5 L1159.5 365.5" stroke="#111" stroke-width="3" fill="none"/><path d="M1159.5 304.5 L1159.5 365.5" stroke="#dde0cc" stroke-width="1.2" fill="none"/><path d="M793.5 304.5 L793.5 365.5" stroke="#111" stroke-width="3" fill="none"/><path d="M793.5 304.5 L793.5 365.5" stroke="#8a9a46" stroke-width="1.2" fill="none"/><path d="M793.5 304.5 L1281.5 304.5" stroke="#111" stroke-width="3" fill="none"/><path d="M793.5 304.5 L1281.5 304.5" stroke="#75883a" stroke-width="1.2" fill="none"/><path d="M1281.2 304.5 L1281.2 365.5" stroke="#111" stroke-width="4.2" fill="none"/><path d="M1281.2 304.5 L1281.2 365.5" stroke="#7e9a3e" stroke-width="2.4" fill="none"/><circle cx="793.3" cy="304.9" r="2.5" fill="#8c8c8c" stroke="#111" stroke-width="1.4"/><circle cx="793.3" cy="304.9" r="0.8" fill="#222"/><circle cx="793.3" cy="365.9" r="2.5" fill="#8c8c8c" stroke="#111" stroke-width="1.4"/><circle cx="793.3" cy="365.9" r="0.8" fill="#222"/><circle cx="915.3" cy="304.9" r="2.5" fill="#8c8c8c" stroke="#111" stroke-width="1.4"/><circle cx="915.3" cy="304.9" r="0.8" fill="#222"/><circle cx="915.3" cy="365.9" r="2.5" fill="#8c8c8c" stroke="#111" stroke-width="1.4"/><circle cx="915.3" cy="365.9" r="0.8" fill="#222"/><circle cx="1037.3" cy="304.9" r="2.5" fill="#8c8c8c" stroke="#111" stroke-width="1.4"/><circle cx="1037.3" cy="304.9" r="0.8" fill="#222"/><circle cx="1037.3" cy="365.9" r="2.5" fill="#8c8c8c" stroke="#111" stroke-width="1.4"/><circle cx="1037.3" cy="365.9" r="0.8" fill="#222"/><circle cx="1159.3" cy="304.9" r="2.5" fill="#8c8c8c" stroke="#111" stroke-width="1.4"/><circle cx="1159.3" cy="304.9" r="0.8" fill="#222"/><circle cx="1159.3" cy="365.9" r="2.5" fill="#8c8c8c" stroke="#111" stroke-width="1.4"/><circle cx="1159.3" cy="365.9" r="0.8" fill="#222"/><circle cx="1281.3" cy="304.9" r="2.5" fill="#8c8c8c" stroke="#111" stroke-width="1.4"/><circle cx="1281.3" cy="304.9" r="0.8" fill="#222"/><circle cx="1281.3" cy="365.9" r="2.5" fill="#8c8c8c" stroke="#111" stroke-width="1.4"/><circle cx="1281.3" cy="365.9" r="0.8" fill="#222"/><path d="M797.2 335.2 L806.5 319.8 V329.6 H902.4000000000001 V319.8 L911.7 335.2 L902.4000000000001 350.6 V341.8 H806.5 V350.6 Z" fill="none" stroke="#111" stroke-width="1.1" stroke-linejoin="miter"/><text x="854.2" y="301" font-size="11.3" text-anchor="middle" fill="#000" textLength="32.6" lengthAdjust="spacingAndGlyphs">2.44 m</text><text x="854.5" y="338.6" font-size="11.3" text-anchor="middle" fill="#000" textLength="13.6" lengthAdjust="spacingAndGlyphs">4P</text><text transform="translate(789.9 334.2) rotate(-90)" font-size="11.3" text-anchor="middle" fill="#000" textLength="32.4" lengthAdjust="spacingAndGlyphs">1.22 m</text><text x="800.3" y="361.6" font-size="9" font-weight="700" fill="#2a3aa2" textLength="5.2" lengthAdjust="spacingAndGlyphs">4</text><path d="M919.2 335.2 L928.5 319.8 V329.6 H1024.4 V319.8 L1033.7 335.2 L1024.4 350.6 V341.8 H928.5 V350.6 Z" fill="none" stroke="#111" stroke-width="1.1" stroke-linejoin="miter"/><text x="976.2" y="301" font-size="11.3" text-anchor="middle" fill="#000" textLength="32.6" lengthAdjust="spacingAndGlyphs">2.44 m</text><text x="976.5" y="338.6" font-size="11.3" text-anchor="middle" fill="#000" textLength="13.6" lengthAdjust="spacingAndGlyphs">4P</text><text transform="translate(911.9 334.2) rotate(-90)" font-size="11.3" text-anchor="middle" fill="#000" textLength="32.4" lengthAdjust="spacingAndGlyphs">1.22 m</text><text x="922.3" y="361.6" font-size="9" font-weight="700" fill="#2a3aa2" textLength="5.2" lengthAdjust="spacingAndGlyphs">7</text><path d="M1041.2 335.2 L1050.5 319.8 V329.6 H1146.4 V319.8 L1155.7 335.2 L1146.4 350.6 V341.8 H1050.5 V350.6 Z" fill="none" stroke="#111" stroke-width="1.1" stroke-linejoin="miter"/><text x="1098.2" y="301" font-size="11.3" text-anchor="middle" fill="#000" textLength="32.6" lengthAdjust="spacingAndGlyphs">2.44 m</text><text x="1098.5" y="338.6" font-size="11.3" text-anchor="middle" fill="#000" textLength="13.6" lengthAdjust="spacingAndGlyphs">4P</text><text transform="translate(1033.9 334.2) rotate(-90)" font-size="11.3" text-anchor="middle" fill="#000" textLength="32.4" lengthAdjust="spacingAndGlyphs">1.22 m</text><text x="1044.3" y="361.6" font-size="9" font-weight="700" fill="#2a3aa2" textLength="5.2" lengthAdjust="spacingAndGlyphs">8</text><path d="M1163.2 335.2 L1172.5 319.8 V329.6 H1268.4 V319.8 L1277.7 335.2 L1268.4 350.6 V341.8 H1172.5 V350.6 Z" fill="none" stroke="#111" stroke-width="1.1" stroke-linejoin="miter"/><text x="1220.2" y="301" font-size="11.3" text-anchor="middle" fill="#000" textLength="32.6" lengthAdjust="spacingAndGlyphs">2.44 m</text><text x="1220.5" y="338.6" font-size="11.3" text-anchor="middle" fill="#000" textLength="13.6" lengthAdjust="spacingAndGlyphs">4P</text><text transform="translate(1155.9 334.2) rotate(-90)" font-size="11.3" text-anchor="middle" fill="#000" textLength="32.4" lengthAdjust="spacingAndGlyphs">1.22 m</text><text x="1166.3" y="361.6" font-size="9" font-weight="700" fill="#2a3aa2" textLength="5.2" lengthAdjust="spacingAndGlyphs">9</text><path d="M740.8 400 V430.6 L748.7 424 L754.4 436 Q756.6 438.2 759 436.3 Q760.4 435 759.6 433 L754.2 422.6 H764.3 Z" fill="#f2f2f2" stroke="#000" stroke-width="2.2" stroke-linejoin="round"/></svg>
<div class="b" style="left:1493px;top:164px;width:423px;height:649px;background:#f0f0f0;border:1px solid #b9b9b9;"></div>
<div class="b" style="left:1494px;top:165px;width:421px;height:23px;background:linear-gradient(#e4e4e4,#d6d6d6);"></div>
<div class="b" style="left:1494px;top:187px;width:421px;height:1px;background:#c2c2c2;"></div>
<span class="t" style="left:1500.40px;top:170.00px;font-size:11px;color:#111;font-weight:700;letter-spacing:-0.050px;">3D View</span>
<svg class="b" style="left:1876px;top:169px;" width="14" height="14" viewBox="0 0 14 14"><path d="M5 3 H9.6 M5.8 3 V7.2 M8.8 3 V7.2 M4 7.6 H10.6 M7.3 7.6 V11.6" fill="none" stroke="#505050" stroke-width="1"/></svg>
<svg class="b" style="left:1897px;top:169px;" width="14" height="14" viewBox="0 0 14 14"><path d="M3 3 L11 11 M11 3 L3 11" fill="none" stroke="#505050" stroke-width="1"/></svg>
<div class="b" style="left:1494px;top:188px;width:421px;height:26px;background:#f0f0f0;"></div>
<div class="b" style="left:1587px;top:190px;width:63px;height:25px;background:#dadada;border:1px solid #b4b4b4;"></div>
<div class="b" style="left:1494px;top:188px;width:94px;height:27px;background:#f0f0f0;border:1px solid #c6c6c6;border-bottom:none;"></div>
<div class="b" style="left:1588px;top:214px;width:327px;height:1px;background:#c6c6c6;"></div>
<span class="t" style="left:1521.70px;top:195.00px;font-size:11px;color:#111;transform:scaleX(1.0463);-webkit-text-stroke:0.1px currentColor;">Conceptual</span>
<span class="t" style="left:1611.40px;top:196.00px;font-size:11px;color:#111;transform:scaleX(1.0800);-webkit-text-stroke:0.1px currentColor;">Model</span>
<div class="b" style="left:1495px;top:215px;width:419px;height:25px;background:#f0f0f0;"></div>
<div class="b" style="left:1496px;top:239px;width:417px;height:550px;background:#000;"></div>
<div class="b" style="left:1495px;top:789px;width:420px;height:23px;background:#f0f0f0;"></div>
<div class="b" style="left:1516px;top:793px;width:1px;height:17px;background:#c6c6c6;"></div>
<svg class="b" style="left:1502px;top:193px;" width="16" height="16" viewBox="0 0 16 16"><path d="M0.8 3.3 L8.1 0.9 L15.2 1.9 L14.6 10.6 L9 15.2 L1.6 11.8 Z" fill="none" stroke="#2e8ad8" stroke-width="1.1" stroke-linejoin="round"/><path d="M0.8 3.3 L9 4.6 L15.2 1.9 M9 4.6 L9 15.2" fill="none" stroke="#2e8ad8" stroke-width="1.1"/><path d="M8.1 0.9 L8 9.4 L1.6 11.8 M8 9.4 L14.6 10.6" fill="none" stroke="#8ec4f0" stroke-width="0.8"/></svg>
<svg class="b" style="left:1592px;top:194px;" width="16" height="16" viewBox="0 0 16 16"><path d="M0.8 3.3 L8.1 0.9 L15.2 1.9 L14.6 10.6 L9 15.2 L1.6 11.8 Z" fill="#6db4ec" stroke="#2e8ad8" stroke-width="1.1" stroke-linejoin="round"/><path d="M0.8 3.3 L9 4.6 L15.2 1.9 L8.1 0.9Z" fill="#9fd0f6" stroke="#2e8ad8" stroke-width="1"/><path d="M9 4.6 L9 15.2" stroke="#2e8ad8" stroke-width="1.1"/></svg>
<svg class="b" style="left:1503px;top:219px;" width="12" height="16" viewBox="0 0 12 16"><path d="M1.8 2 V12.6 L4.6 10 L6.6 14.2 L8.3 13.4 L6.4 9.4 H10 Z" fill="#111"/></svg>
<svg class="b" style="left:1526px;top:219px;" width="16" height="16" viewBox="0 0 16 16"><circle cx="6.2" cy="6.6" r="5" fill="none" stroke="#111" stroke-width="1.2"/><path d="M9.9 10.4 L14.3 14.6" stroke="#111" stroke-width="1.9"/></svg>
<svg class="b" style="left:1553px;top:219px;" width="14" height="16" viewBox="0 0 14 16"><path d="M1 2.5 H4.6 L1 6.1Z M13 2.5 V6.1 L9.4 2.5Z M1 14 V10.4 L4.6 14Z M13 14 H9.4 L13 10.4Z" fill="#111"/><path d="M2.2 3.7 L5.4 6.9 M11.8 3.7 L8.6 6.9 M2.2 12.8 L5.4 9.6 M11.8 12.8 L8.6 9.6" stroke="#111" stroke-width="1.3"/></svg>
<svg class="b" style="left:1577px;top:219px;" width="18" height="17" viewBox="0 0 18 17"><circle cx="6.8" cy="6.4" r="4.3" fill="#58a8e8"/><circle cx="6.8" cy="6.4" r="5.4" fill="none" stroke="#111" stroke-width="1.1"/><path d="M4.6 5.4 L6.8 6.6 L9 5.4 M6.8 6.6 V9" stroke="#eaf4ff" stroke-width="0.9" fill="none"/><path d="M10.8 10.6 L16 15.6" stroke="#111" stroke-width="1.2"/></svg>
<svg class="b" style="left:1604px;top:219px;" width="16" height="16" viewBox="0 0 16 16"><rect x="1.4" y="1.6" width="12" height="12" fill="none" stroke="#2e8ad8" stroke-width="1.1" stroke-dasharray="2.2 1.6"/><circle cx="7.6" cy="7.4" r="4" fill="#f0f0f0" stroke="#111" stroke-width="1.2"/><path d="M10.6 10.6 L14.2 14.2" stroke="#111" stroke-width="1.9"/></svg>
<svg class="b" style="left:1629px;top:219px;" width="18" height="17" viewBox="0 0 18 17"><path d="M3.4 8.6 Q9.6 -0.6 16.6 7.2 Q12.6 12.2 8.2 11.2" fill="none" stroke="#111" stroke-width="1.2"/><circle cx="10.2" cy="6.4" r="2.2" fill="none" stroke="#111" stroke-width="1.1"/><circle cx="4.6" cy="11" r="2.6" fill="#f0f0f0" stroke="#111" stroke-width="1.1"/><path d="M6.4 13 L8.6 15.6" stroke="#111" stroke-width="1.2"/></svg>
<svg class="b" style="left:1655px;top:219px;" width="18" height="17" viewBox="0 0 18 17"><path d="M10 1.6 A7 7 0 0 1 15.8 8" fill="none" stroke="#111" stroke-width="1.1"/><path d="M2.2 9 A7 7 0 0 0 8 15.2" fill="none" stroke="#111" stroke-width="1.1"/><path d="M9.6 0.6 L12 2 L9.8 3.4Z M8.4 16.2 L6 14.8 L8.2 13.4Z" fill="#111"/><text x="9" y="11.6" font-size="6.6" font-weight="700" text-anchor="middle" fill="#222">3D</text></svg>
<svg class="b" style="left:1682px;top:219px;" width="16" height="16" viewBox="0 0 16 16"><path d="M8 2 V14 M2 8 H14" stroke="#111" stroke-width="1.5"/><path d="M8 0.6 L10.6 3.8 H5.4Z M8 15.4 L10.6 12.2 H5.4Z M0.6 8 L3.8 5.4 V10.6Z M15.4 8 L12.2 5.4 V10.6Z" fill="#111"/></svg>
<svg class="b" style="left:1708px;top:219px;" width="17" height="17" viewBox="0 0 17 17"><rect x="6.4" y="1" width="8.6" height="9.6" fill="#f0f0f0" stroke="#111" stroke-width="1.2"/><rect x="1.6" y="5" width="10.4" height="10.4" fill="#f4f4f4" stroke="#111" stroke-width="1.4"/><path d="M2.4 14.6 L6.6 10.6 H11.6 M6.6 10.6 V5.6" stroke="#b8b8b8" stroke-width="0.8" fill="none"/></svg>
<svg class="b" style="left:1727px;top:224px;" width="6" height="5" viewBox="0 0 6 5"><path d="M0.3 0.6 H5.7 L3 4 Z" fill="#111"/></svg>
<svg class="b" style="left:1743px;top:219.5px;" width="16" height="16" viewBox="0 0 16 16"><path d="M0.8 3.3 L8.1 0.9 L15.2 1.9 L14.6 10.6 L9 15.2 L1.6 11.8 Z" fill="#fff" stroke="#2e8ad8" stroke-width="1.1" stroke-linejoin="round"/><path d="M0.8 3.3 L9 4.6 L15.2 1.9 M9 4.6 L9 15.2" fill="none" stroke="#2e8ad8" stroke-width="1.1"/></svg>
<svg class="b" style="left:1743px;top:219px;" width="17" height="17" viewBox="0 0 17 17"><path d="M11.4 5.2 L12.8 6.4 L6.6 13.4 L4.6 14.2 L5.2 12.2 Z" fill="#555" stroke="#222" stroke-width="0.7"/><path d="M1 15.6 H6" stroke="#2e8ad8" stroke-width="1.2"/></svg>
<svg class="b" style="left:1762px;top:224px;" width="6" height="5" viewBox="0 0 6 5"><path d="M0.3 0.6 H5.7 L3 4 Z" fill="#111"/></svg>
<svg class="b" style="left:1778px;top:219.5px;" width="16" height="16" viewBox="0 0 16 16"><path d="M0.8 3.3 L8.1 0.9 L15.2 1.9 L14.6 10.6 L9 15.2 L1.6 11.8 Z" fill="none" stroke="#2e8ad8" stroke-width="1.1" stroke-linejoin="round"/><path d="M0.8 3.3 L9 4.6 L15.2 1.9 M9 4.6 L9 15.2" fill="none" stroke="#2e8ad8" stroke-width="1.1"/><path d="M8.1 0.9 L8 9.4 L1.6 11.8 M8 9.4 L14.6 10.6" fill="none" stroke="#8ec4f0" stroke-width="0.8"/></svg>
<svg class="b" style="left:1776px;top:226px;" width="11" height="11" viewBox="0 0 11 11"><circle cx="5.5" cy="5.5" r="3.6" fill="#f0f0f0" stroke="#222" stroke-width="1.2" stroke-dasharray="1.6 1.2"/><circle cx="5.5" cy="5.5" r="2.9" fill="#f0f0f0" stroke="#222" stroke-width="1"/><circle cx="5.5" cy="5.5" r="1.1" fill="none" stroke="#222" stroke-width="0.9"/></svg>
<svg class="b" style="left:1804px;top:219px;" width="16" height="16" viewBox="0 0 16 16"><g fill="none" stroke="#1fa53a" stroke-width="1.9"><path d="M2.6 7.2 A5.6 5.6 0 0 1 12 4.4"/><path d="M13.4 8.8 A5.6 5.6 0 0 1 4 11.6"/></g><path d="M9.8 5.6 L14.4 6.2 L13.8 1.6Z M6.2 10.4 L1.6 9.8 L2.2 14.4Z" fill="#1fa53a"/></svg>
<svg class="b" style="left:1496px;top:240px" width="418" height="549" viewBox="1496 240 418 549"><path fill-rule="evenodd" d="M1667.2 360.9 L1921.6 540.5 L1741.6 667.9 L1487.2 488.3 Z M1667.2 371.8 L1906.2 540.5 L1741.6 657.0 L1502.6 488.3 Z" fill="#03030b" stroke="none"/><path d="M1667.2 360.9L1487.2 488.3M1673.4 365.3L1493.4 492.7M1679.6 369.7L1499.6 497.1M1685.8 374.1L1505.8 501.4M1692.0 378.5L1512.0 505.8M1698.2 382.8L1518.2 510.2M1704.4 387.2L1524.5 514.6M1710.6 391.6L1530.7 519.0M1716.8 396.0L1536.9 523.3M1723.0 400.3L1543.1 527.7M1729.2 404.7L1549.3 532.1M1735.4 409.1L1555.5 536.5M1741.6 413.5L1561.7 540.9M1747.8 417.9L1567.9 545.2M1754.0 422.2L1574.1 549.6M1760.3 426.6L1580.3 554.0M1766.5 431.0L1586.5 558.4M1772.7 435.4L1592.7 562.8M1778.9 439.8L1598.9 567.1M1785.1 444.1L1605.1 571.5M1791.3 448.5L1611.3 575.9M1797.5 452.9L1617.5 580.3M1803.7 457.3L1623.7 584.7M1809.9 461.7L1629.9 589.0M1816.1 466.0L1636.1 593.4M1822.3 470.4L1642.3 597.8M1828.5 474.8L1648.5 602.2M1834.7 479.2L1654.8 606.6M1840.9 483.6L1661.0 610.9M1847.1 487.9L1667.2 615.3M1853.3 492.3L1673.4 619.7M1859.5 496.7L1679.6 624.1M1865.7 501.1L1685.8 628.5M1871.9 505.5L1692.0 632.8M1878.1 509.8L1698.2 637.2M1884.3 514.2L1704.4 641.6M1890.6 518.6L1710.6 646.0M1896.8 523.0L1716.8 650.3M1903.0 527.4L1723.0 654.7M1909.2 531.7L1729.2 659.1M1915.4 536.1L1735.4 663.5M1921.6 540.5L1741.6 667.9M1667.2 360.9L1921.6 540.5M1661.0 365.3L1915.4 544.9M1654.8 369.7L1909.2 549.3M1648.6 374.1L1903.0 553.7M1642.4 378.5L1896.8 558.1M1636.2 382.9L1890.6 562.5M1629.9 387.3L1884.3 566.9M1623.7 391.7L1878.1 571.2M1617.5 396.1L1871.9 575.6M1611.3 400.5L1865.7 580.0M1605.1 404.9L1859.5 584.4M1598.9 409.2L1853.3 588.8M1592.7 413.6L1847.1 593.2M1586.5 418.0L1840.9 597.6M1580.3 422.4L1834.7 602.0M1574.1 426.8L1828.5 606.4M1567.9 431.2L1822.3 610.8M1561.7 435.6L1816.1 615.2M1555.5 440.0L1809.9 619.6M1549.3 444.4L1803.7 623.9M1543.1 448.8L1797.5 628.3M1536.9 453.2L1791.3 632.7M1530.7 457.6L1785.1 637.1M1524.5 461.9L1778.9 641.5M1518.2 466.3L1772.6 645.9M1512.0 470.7L1766.4 650.3M1505.8 475.1L1760.2 654.7M1499.6 479.5L1754.0 659.1M1493.4 483.9L1747.8 663.5M1487.2 488.3L1741.6 667.9" stroke="#3f3f3b" stroke-width="1" fill="none" shape-rendering="crispEdges"/><path d="M1667.2 371.8 L1906.2 540.5 L1741.6 657.0 L1502.6 488.3 Z" stroke="#b4b4b4" stroke-width="1" fill="none" shape-rendering="crispEdges"/><path d="M1683.9 616.1 L1707 600.4 L1763.6 640.5" stroke="#b4b4b4" stroke-width="1" fill="none" shape-rendering="crispEdges"/><path d="M1688.6 428.6l61.2 42.8M1688.6 436.6l61.2 42.8M1688.6 444.6l61.2 42.8M1688.6 452.6l61.2 42.8M1688.6 460.6l61.2 42.8M1688.6 468.6l61.2 42.8M1696.4 424.6l61.2 42.8M1696.4 432.6l61.2 42.8M1696.4 440.6l61.2 42.8M1696.4 448.6l61.2 42.8M1696.4 456.6l61.2 42.8M1696.4 464.6l61.2 42.8M1688.6 428.6l7.8 -4M1688.6 436.6l7.8 -4M1688.6 444.6l7.8 -4M1688.6 452.6l7.8 -4M1688.6 460.6l7.8 -4M1688.6 468.6l7.8 -4M1703.9 439.3l7.8 -4M1703.9 447.3l7.8 -4M1703.9 455.3l7.8 -4M1703.9 463.3l7.8 -4M1703.9 471.3l7.8 -4M1703.9 479.3l7.8 -4M1719.2 450.0l7.8 -4M1719.2 458.0l7.8 -4M1719.2 466.0l7.8 -4M1719.2 474.0l7.8 -4M1719.2 482.0l7.8 -4M1719.2 490.0l7.8 -4M1734.5 460.7l7.8 -4M1734.5 468.7l7.8 -4M1734.5 476.7l7.8 -4M1734.5 484.7l7.8 -4M1734.5 492.7l7.8 -4M1734.5 500.7l7.8 -4M1749.8 471.4l7.8 -4M1749.8 479.4l7.8 -4M1749.8 487.4l7.8 -4M1749.8 495.4l7.8 -4M1749.8 503.4l7.8 -4M1749.8 511.4l7.8 -4M1694.0 442.0l10.3 1.7M1694.0 458.0l10.3 1.7M1709.3 452.7l10.3 1.7M1709.3 468.7l10.3 1.7M1724.6 463.4l10.3 1.7M1724.6 479.4l10.3 1.7M1739.9 474.1l10.3 1.7M1739.9 490.1l10.3 1.7" stroke="#22c822" stroke-width="1" fill="none"/><path d="M1692.0 432.0l6 4.2M1692.0 448.0l6 4.2M1692.0 464.0l6 4.2M1707.3 442.7l6 4.2M1707.3 458.7l6 4.2M1707.3 474.7l6 4.2M1722.6 453.4l6 4.2M1722.6 469.4l6 4.2M1722.6 485.4l6 4.2M1737.9 464.1l6 4.2M1737.9 480.1l6 4.2M1737.9 496.1l6 4.2" stroke="#c0602a" stroke-width="1.3" fill="none"/><path d="M1688.6 424.6v47M1703.9 435.3v47M1719.2 446.0v47M1734.5 456.7v47M1749.8 467.4v47M1696.4 420.6v47M1711.7 431.3v47M1727.0 442.0v47M1742.3 452.7v47M1757.6 463.4v47" stroke="#f4f4f4" stroke-width="1" stroke-dasharray="3 1.4" fill="none"/><path d="M1685.7 424.5 V473.9 L1746.9 516.7 V467.3 Z" stroke="#c2c2c2" stroke-width="2.3" fill="none" stroke-linejoin="round"/><path d="M1696.1 495.6 L1696.9 550 L1729.5 524.7 V471 Z" stroke="#c2c2c2" stroke-width="2.3" fill="none" stroke-linejoin="round"/><path d="M1729.8 471 V525 M1735.4 473 V526 L1746.9 516.7 M1729.5 524.7 L1735.4 526" stroke="#c4c4c4" stroke-width="2" fill="none"/><path d="M1731.6 472 V511" stroke="#c4c4c4" stroke-width="2" fill="none"/><ellipse cx="1853.8" cy="315" rx="35.5" ry="26" fill="none" stroke="#2e2e2e" stroke-width="9"/><path d="M1853.8 269 L1882 284.6 L1854.4 305.3 L1826 284.6 Z" fill="#8e8e8e" stroke="#1a1a1a" stroke-width="0.6"/><path d="M1826 284.6 L1854.4 305.3 V331 L1829.4 311.4 Z" fill="#8a8a8a" stroke="#1a1a1a" stroke-width="0.6"/><path d="M1882 284.6 L1854.4 305.3 V331 L1879.2 311.4 Z" fill="#909090" stroke="#1a1a1a" stroke-width="0.6"/><text transform="translate(1854.6 284.6) rotate(28) skewX(-20)" font-size="6.2" font-weight="700" text-anchor="middle" fill="#111">TOP</text><text transform="translate(1840.2 311.5) rotate(37) skewX(20)" font-size="5.6" font-weight="700" text-anchor="middle" fill="#111">FRONT</text><text transform="translate(1867.6 312.3) rotate(-37) skewX(-20)" font-size="5.6" font-weight="700" text-anchor="middle" fill="#111">RIGHT</text><text transform="translate(1817.8 337.4) rotate(52)" font-size="14.5" font-weight="700" text-anchor="middle" fill="#a2a2a2" stroke="#a2a2a2" stroke-width="0.4">S</text><text transform="translate(1888.4 336.8) rotate(-58)" font-size="14.5" font-weight="700" text-anchor="middle" fill="#a2a2a2" stroke="#a2a2a2" stroke-width="0.4">E</text><path d="M1542 742 V732 M1544.5 741 L1556.5 732.3 M1544.5 745.5 L1554 752" stroke="#f4f4f4" stroke-width="1.7" fill="none"/><path d="M1542 717 L1545.8 726.5 L1545.2 729.3 H1538.6 L1538 726.5 Z M1568 724.8 L1560.7 733.6 L1557.3 734.4 L1555.4 729.6 Z M1568 761 L1556.2 758.6 L1554.6 755.8 L1556.2 751.6 L1560.4 751.2 Z M1537.2 742 H1546 L1544 746.8 H1539 Z" fill="#f4f4f4"/><text x="1545" y="714" font-size="10.5" fill="#f0f0f0" textLength="7" lengthAdjust="spacingAndGlyphs">Z</text><text x="1571" y="722" font-size="10.5" fill="#f0f0f0" textLength="7.2" lengthAdjust="spacingAndGlyphs">Y</text><text x="1571" y="759" font-size="10.5" fill="#f0f0f0" textLength="7.2" lengthAdjust="spacingAndGlyphs">X</text></svg>
<div class="b" style="left:4px;top:818px;width:1912px;height:183px;background:#f0f0f0;border:1px solid #c4c4c4;"></div>
<div class="b" style="left:5px;top:819px;width:1910px;height:22px;background:#dcdcdc;"></div>
<div class="b" style="left:5px;top:841px;width:1910px;height:1px;background:#cdcdcd;"></div>
<span class="t" style="left:11.30px;top:824.00px;font-size:11px;color:#111;font-weight:700;transform:scaleX(0.9568);">Bay Level Editor (Select a Bay)</span>
<div class="b" style="left:5px;top:842px;width:1910px;height:30px;background:#dedede;"></div>
<div class="b" style="left:5px;top:872px;width:1910px;height:1px;background:#cfcfcf;"></div>
<span class="t" style="left:34.60px;top:851.00px;font-size:11px;color:#858585;letter-spacing:-0.059px;">Add Level</span>
<span class="t" style="left:112.50px;top:851.00px;font-size:11px;color:#858585;letter-spacing:-0.105px;">Remove Top Level</span>
<span class="t" style="left:240.60px;top:851.00px;font-size:11px;color:#858585;letter-spacing:-0.134px;">Remove Selected</span>
<span class="t" style="left:355.40px;top:851.00px;font-size:11px;color:#858585;letter-spacing:0.097px;">Plank all</span>
<span class="t" style="left:427.50px;top:851.00px;font-size:11px;color:#858585;letter-spacing:0.117px;">Plank every other</span>
<span class="t" style="left:544.40px;top:851.00px;font-size:11px;color:#858585;transform:scaleX(1.0575);">Invert planked</span>
<span class="t" style="left:656.60px;top:851.00px;font-size:11px;color:#858585;letter-spacing:-0.007px;">Reset overrides</span>
<div class="b" style="left:210px;top:847px;width:1px;height:21px;background:#c6c6c6;"></div>
<div class="b" style="left:626px;top:847px;width:1px;height:21px;background:#c6c6c6;"></div>
<div class="b" style="left:742px;top:842px;width:1px;height:30px;background:#c9c9c9;"></div>
<svg class="b" style="left:0;top:842px" width="760" height="30" viewBox="0 842 760 30"><path d="M13 852.4 H19.8 M16.4 849.2 V855.6" stroke="#b2b2b2" stroke-width="1" fill="none"/><rect x="18.4" y="854.2" width="8.6" height="3.6" fill="none" stroke="#b2b2b2" stroke-width="1"/><rect x="20.4" y="858.0" width="8.6" height="3.4" fill="none" stroke="#b2b2b2" stroke-width="1"/><rect x="20.4" y="861.4000000000001" width="8.6" height="3.4" fill="none" stroke="#b2b2b2" stroke-width="1"/><path d="M92.4 850 L96.6 854.6 M96.6 850 L92.4 854.6" stroke="#b2b2b2" stroke-width="0.9" fill="none"/><rect x="96.4" y="854.2" width="8.6" height="3.6" fill="none" stroke="#b2b2b2" stroke-width="1"/><rect x="98.4" y="858.0" width="8.6" height="3.4" fill="none" stroke="#b2b2b2" stroke-width="1"/><rect x="98.4" y="861.4000000000001" width="8.6" height="3.4" fill="none" stroke="#b2b2b2" stroke-width="1"/><path d="M220.4 850 L224.6 854.6 M224.6 850 L220.4 854.6" stroke="#b2b2b2" stroke-width="0.9" fill="none"/><rect x="226.4" y="853.6" width="8.4" height="3.2" fill="none" stroke="#b2b2b2" stroke-width="1"/><rect x="224.4" y="857" width="8.4" height="3.2" fill="#c4c4c4" stroke="#b2b2b2" stroke-width="1"/><rect x="226.4" y="860.6" width="8.4" height="3.2" fill="none" stroke="#b2b2b2" stroke-width="1"/><rect x="334.4" y="850.6" width="9.2" height="2.4" fill="#fbfbfb" stroke="#b2b2b2" stroke-width="0.8"/><path d="M346 852.2 l1 1 l1.8 -2.2" fill="none" stroke="#b2b2b2" stroke-width="0.8"/><rect x="334.4" y="854.7" width="9.2" height="2.4" fill="#fbfbfb" stroke="#b2b2b2" stroke-width="0.8"/><path d="M346 856.3 l1 1 l1.8 -2.2" fill="none" stroke="#b2b2b2" stroke-width="0.8"/><rect x="334.4" y="858.8" width="9.2" height="2.4" fill="#fbfbfb" stroke="#b2b2b2" stroke-width="0.8"/><path d="M346 860.4 l1 1 l1.8 -2.2" fill="none" stroke="#b2b2b2" stroke-width="0.8"/><rect x="334.4" y="862.9" width="9.2" height="2.4" fill="#fbfbfb" stroke="#b2b2b2" stroke-width="0.8"/><path d="M346 864.5 l1 1 l1.8 -2.2" fill="none" stroke="#b2b2b2" stroke-width="0.8"/><path d="M406 851.8 H416" stroke="#a4a4a4" stroke-width="1"/><rect x="406.4" y="854.7" width="9.2" height="2.4" fill="#fbfbfb" stroke="#b2b2b2" stroke-width="0.8"/><path d="M418 856.3 l1 1 l1.8 -2.2" fill="none" stroke="#b2b2b2" stroke-width="0.8"/><path d="M406 860.0 H416" stroke="#a4a4a4" stroke-width="1"/><rect x="406.4" y="862.9" width="9.2" height="2.4" fill="#fbfbfb" stroke="#b2b2b2" stroke-width="0.8"/><path d="M418 864.5 l1 1 l1.8 -2.2" fill="none" stroke="#b2b2b2" stroke-width="0.8"/><rect x="523.4" y="850.4" width="7" height="2.4" fill="#fbfbfb" stroke="#c4c4c4" stroke-width="0.7"/><path d="M533.6 851.6 H539.4" stroke="#a8a8a8" stroke-width="1"/><rect x="523.4" y="854.4" width="7" height="2.4" fill="#fbfbfb" stroke="#c4c4c4" stroke-width="0.7"/><path d="M533.6 855.6 H539.4" stroke="#a8a8a8" stroke-width="1"/><rect x="523.4" y="858.4" width="7" height="2.4" fill="#fbfbfb" stroke="#c4c4c4" stroke-width="0.7"/><path d="M533.6 859.6 H539.4" stroke="#a8a8a8" stroke-width="1"/><rect x="523.4" y="862.4" width="7" height="2.4" fill="#fbfbfb" stroke="#c4c4c4" stroke-width="0.7"/><path d="M533.6 863.6 H539.4" stroke="#a8a8a8" stroke-width="1"/><path d="M531.9 849.6 V865.2" stroke="#b2b2b2" stroke-width="0.9"/><rect x="643.4" y="849.6" width="7.2" height="15" fill="none" stroke="#bdbdbd" stroke-width="1"/><path d="M643.4 853.4 H650.6 M643.4 857.2 H650.6 M643.4 861 H650.6" stroke="#bdbdbd" stroke-width="0.9"/><path d="M636 853 H639.6 Q641.4 855.4 639.6 857.4 H636.6 M637.8 851.2 L635.8 853 L637.8 854.8" fill="none" stroke="#c0c0c0" stroke-width="0.9"/></svg>
<div class="b" style="left:9px;top:877px;width:1902px;height:119px;background:#ffffff;border:1px solid #8e8e8e;"></div>
<div class="b" style="left:10px;top:878px;width:1900px;height:22px;background:#f0f0f0;"></div>
<div class="b" style="left:10px;top:900px;width:1900px;height:1px;background:#9a9a9a;"></div>
<div class="b" style="left:61px;top:878px;width:1px;height:22px;background:#9a9a9a;"></div>
<div class="b" style="left:117px;top:878px;width:1px;height:22px;background:#9a9a9a;"></div>
<div class="b" style="left:172px;top:878px;width:1px;height:22px;background:#9a9a9a;"></div>
<div class="b" style="left:253px;top:878px;width:1px;height:22px;background:#9a9a9a;"></div>
<div class="b" style="left:321px;top:878px;width:1px;height:22px;background:#9a9a9a;"></div>
<div class="b" style="left:391px;top:878px;width:1px;height:22px;background:#9a9a9a;"></div>
<div class="b" style="left:467px;top:878px;width:1px;height:22px;background:#9a9a9a;"></div>
<div class="b" style="left:535px;top:878px;width:1px;height:22px;background:#9a9a9a;"></div>
<div class="b" style="left:600px;top:878px;width:1px;height:22px;background:#9a9a9a;"></div>
<div class="b" style="left:663px;top:878px;width:1px;height:22px;background:#9a9a9a;"></div>
<div class="b" style="left:763px;top:878px;width:1px;height:22px;background:#9a9a9a;"></div>
<div class="b" style="left:823px;top:878px;width:1px;height:22px;background:#9a9a9a;"></div>
<div class="b" style="left:858px;top:878px;width:1px;height:22px;background:#9a9a9a;"></div>
<div class="b" style="left:905px;top:878px;width:1px;height:22px;background:#9a9a9a;"></div>
<div class="b" style="left:172px;top:878px;width:2px;height:22px;background:#9a9a9a;"></div>
<div class="b" style="left:857px;top:878px;width:2px;height:22px;background:#9a9a9a;"></div>
<span class="t" style="left:14.50px;top:883.00px;font-size:11px;color:#7a7a7a;transform:scaleX(0.9067);">Level</span>
<span class="t" style="left:66.40px;top:883.00px;font-size:11px;color:#7a7a7a;letter-spacing:0.106px;">Elevation</span>
<span class="t" style="left:122.20px;top:883.00px;font-size:11px;color:#7a7a7a;letter-spacing:0.142px;">Planked</span>
<span class="t" style="left:178.50px;top:883.00px;font-size:11px;color:#7a7a7a;transform:scaleX(1.0870);">Nodes in lift</span>
<span class="t" style="left:258.50px;top:883.00px;font-size:11px;color:#7a7a7a;letter-spacing:0.150px;">Guardrails</span>
<span class="t" style="left:326.30px;top:883.00px;font-size:11px;color:#7a7a7a;transform:scaleX(1.0375);">Toeboards</span>
<span class="t" style="left:396.00px;top:883.00px;font-size:11px;color:#7a7a7a;letter-spacing:-0.052px;">Vert. Braces</span>
<span class="t" style="left:472.50px;top:883.00px;font-size:11px;color:#7a7a7a;letter-spacing:-0.139px;">Plan Brace</span>
<span class="t" style="left:540.00px;top:883.00px;font-size:11px;color:#7a7a7a;transform:scaleX(0.9031);">Ties</span>
<span class="t" style="left:605.40px;top:883.00px;font-size:11px;color:#7a7a7a;letter-spacing:-0.125px;">Ledgers</span>
<span class="t" style="left:668.50px;top:883.00px;font-size:11px;color:#7a7a7a;letter-spacing:0.057px;">Cantilever/Brack...</span>
<span class="t" style="left:768.50px;top:883.00px;font-size:11px;color:#7a7a7a;transform:scaleX(1.1011);">Netting</span>
<span class="t" style="left:828.40px;top:883.00px;font-size:11px;color:#7a7a7a;letter-spacing:-0.125px;">Skip</span>
<span class="t" style="left:863.50px;top:883.00px;font-size:11px;color:#7a7a7a;transform:scaleX(1.0468);">More</span>
<svg class="b" style="left:45px;top:887px;" width="10" height="6" viewBox="0 0 10 6"><path d="M0 0.5 H9.6 L4.8 5.6 Z" fill="#6b6b6b"/></svg>
<svg class="b" style="left:1876px;top:823px;" width="14" height="14" viewBox="0 0 14 14"><path d="M5 3 H9.6 M5.8 3 V7.2 M8.8 3 V7.2 M4 7.6 H10.6 M7.3 7.6 V11.6" fill="none" stroke="#505050" stroke-width="1"/></svg>
<svg class="b" style="left:1897px;top:823px;" width="14" height="14" viewBox="0 0 14 14"><path d="M3 3 L11 11 M11 3 L3 11" fill="none" stroke="#505050" stroke-width="1"/></svg>
<div class="b" style="left:0px;top:1003px;width:1920px;height:28px;background:#dcdcdc;"></div>
<div class="b" style="left:0px;top:1002px;width:1920px;height:1px;background:#c8c8c8;"></div>
<div class="b" style="left:0px;top:1031px;width:1920px;height:3px;background:#f4f6fb;"></div>
<span class="t" style="left:7.30px;top:1011.00px;font-size:11px;color:#1e1e1e;transform:scaleX(0.9345);">RING</span>
<span class="t" style="left:1399.20px;top:1011.00px;font-size:11px;color:#1e1e1e;transform:scaleX(0.9273);">Bays:</span>
<span class="t" style="left:1448.30px;top:1011.00px;font-size:11px;color:#1e1e1e;transform:scaleX(0.9233);">Levels:</span>
<span class="t" style="left:1504.70px;top:1011.00px;font-size:11px;color:#1e1e1e;letter-spacing:-0.128px;">Max elev:</span>
<span class="t" style="left:1574.50px;top:1011.00px;font-size:11px;color:#1e1e1e;letter-spacing:0.125px;">Min elev:</span>
<span class="t" style="left:1643.30px;top:1011.00px;font-size:11px;color:#1e1e1e;transform:scaleX(1.0483);">Leg length:</span>
<span class="t" style="left:1723.80px;top:1011.00px;font-size:11px;color:#1e1e1e;transform:scaleX(1.0465);">Volume:</span>
<span class="t" style="left:1861.90px;top:1011.00px;font-size:11px;color:#1e1e1e;transform:scaleX(0.9280);">133%</span>
<div class="b" style="left:1441px;top:1005px;width:1px;height:24px;background:#a8a8a8;"></div>
<div class="b" style="left:1497px;top:1005px;width:1px;height:24px;background:#a8a8a8;"></div>
<div class="b" style="left:1567px;top:1005px;width:1px;height:24px;background:#a8a8a8;"></div>
<div class="b" style="left:1636px;top:1005px;width:1px;height:24px;background:#a8a8a8;"></div>
<div class="b" style="left:1717px;top:1005px;width:1px;height:24px;background:#a8a8a8;"></div>
<div class="b" style="left:1806px;top:1005px;width:1px;height:24px;background:#a8a8a8;"></div>
<div class="b" style="left:1780px;top:1005px;width:24px;height:24px;background:#fba20e;"></div>
<svg class="b" style="left:1780px;top:1005px;" width="24" height="24" viewBox="0 0 24 24"><g fill="none" stroke="#1f7ae0" stroke-width="1.8"><path d="M6.5 11 A5.6 5.6 0 0 1 16.8 8.6"/><path d="M17.5 13 A5.6 5.6 0 0 1 7.2 15.4"/></g><path d="M14.2 8.9 L18.6 9.3 L18.2 5 Z M9.8 15.1 L5.4 14.7 L5.8 19 Z" fill="#1f7ae0"/></svg>
<svg class="b" style="left:1814px;top:1010px;" width="15" height="15" viewBox="0 0 15 15"><rect x="0.6" y="0.6" width="13.3" height="13.3" fill="#fff" stroke="#111" stroke-width="1.2"/><path d="M3 3 L6 6 M11.5 3 L8.5 6 M3 11.5 L6 8.5 M11.5 11.5 L8.5 8.5" stroke="#111" stroke-width="1.2"/><path d="M2.5 2.5 H5.5 L2.5 5.5Z M12 2.5 V5.5 L9 2.5Z M2.5 12 V9 L5.5 12Z M12 12 H9 L12 9Z" fill="#111"/></svg>
<svg class="b" style="left:1837px;top:1009px;" width="16" height="16" viewBox="0 0 16 16"><circle cx="6" cy="6" r="4.9" fill="none" stroke="#222" stroke-width="1.2"/><path d="M9.6 9.6 L14.6 14.6" stroke="#222" stroke-width="1.8"/><path d="M3.6 6 H8.4" stroke="#2a7ad6" stroke-width="1.2"/></svg>
<svg class="b" style="left:1896px;top:1009px;" width="16" height="16" viewBox="0 0 16 16"><circle cx="6" cy="6" r="4.9" fill="none" stroke="#222" stroke-width="1.2"/><path d="M9.6 9.6 L14.6 14.6" stroke="#222" stroke-width="1.8"/><path d="M3.6 6 H8.4 M6 3.6 V8.4" stroke="#2a7ad6" stroke-width="1.2"/></svg>
<div class="b" style="left:0px;top:162px;width:2px;height:872px;background:#8a8a8a;"></div>
<div class="b" style="left:1918px;top:162px;width:2px;height:872px;background:#f6f6f6;"></div>
</div></body></html>
